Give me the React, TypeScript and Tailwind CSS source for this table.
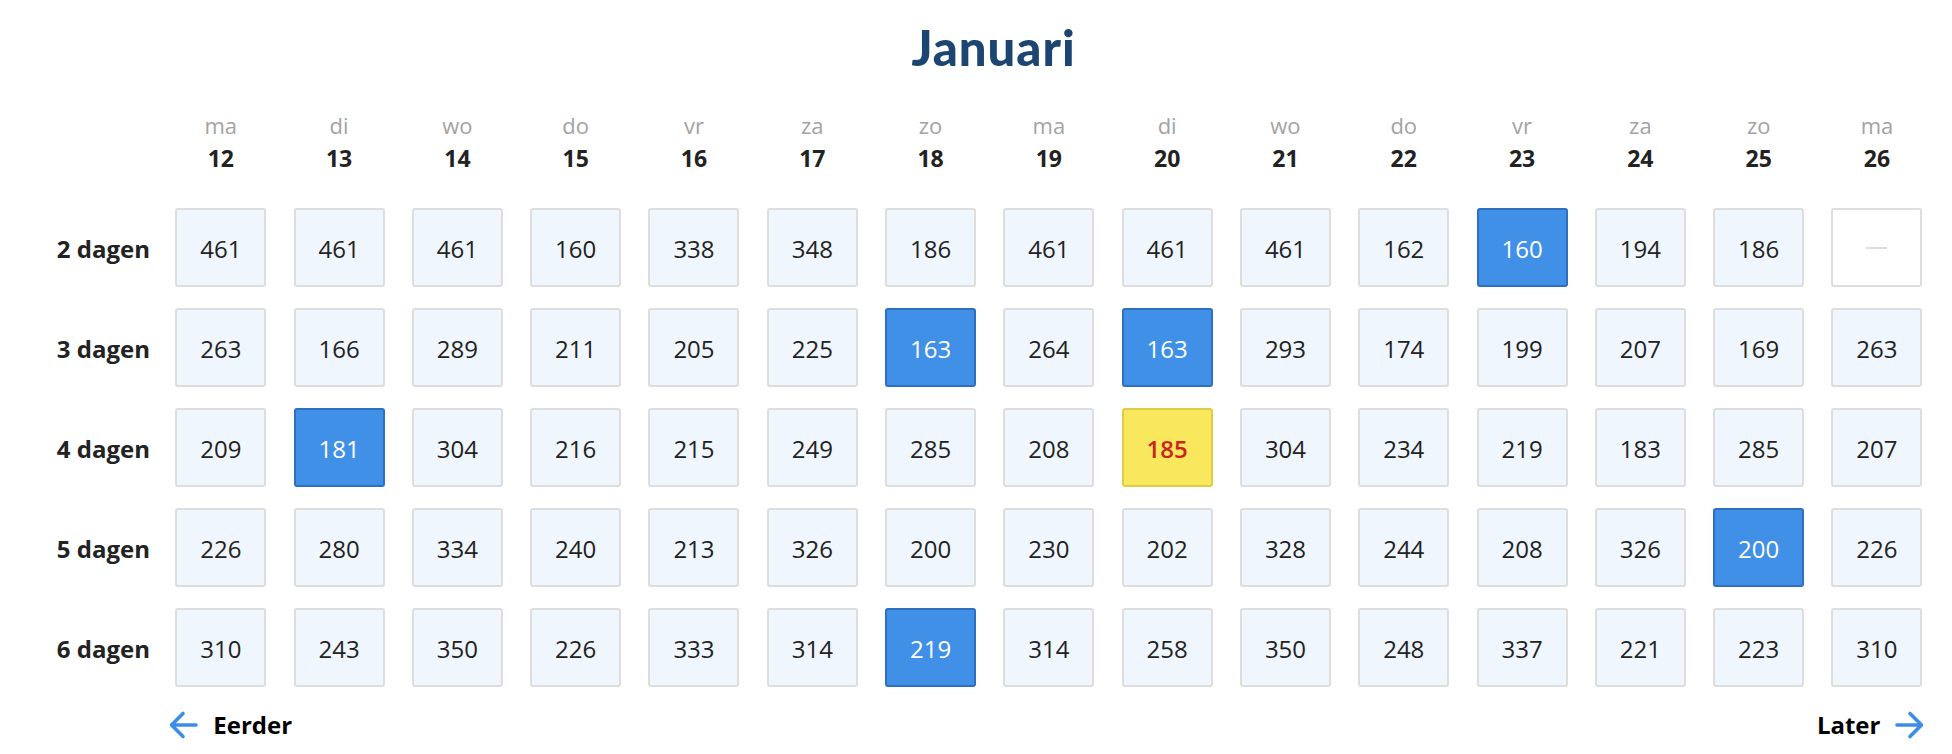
import React from "react";

type Cell = { v: string; kind?: "sel" | "best" | "empty" };

const days = ["ma", "di", "wo", "do", "vr", "za", "zo", "ma", "di", "wo", "do", "vr", "za", "zo", "ma"];
const dates = [12, 13, 14, 15, 16, 17, 18, 19, 20, 21, 22, 23, 24, 25, 26];

const rows: { label: string; cells: Cell[] }[] = [
    {
        label: "2 dagen",
        cells: [
            { v: "461" }, { v: "461" }, { v: "461" }, { v: "160" }, { v: "338" }, { v: "348" }, { v: "186" },
            { v: "461" }, { v: "461" }, { v: "461" }, { v: "162" }, { v: "160", kind: "sel" }, { v: "194" },
            { v: "186" }, { v: "", kind: "empty" },
        ],
    },
    {
        label: "3 dagen",
        cells: [
            { v: "263" }, { v: "166" }, { v: "289" }, { v: "211" }, { v: "205" }, { v: "225" }, { v: "163", kind: "sel" },
            { v: "264" }, { v: "163", kind: "sel" }, { v: "293" }, { v: "174" }, { v: "199" }, { v: "207" },
            { v: "169" }, { v: "263" },
        ],
    },
    {
        label: "4 dagen",
        cells: [
            { v: "209" }, { v: "181", kind: "sel" }, { v: "304" }, { v: "216" }, { v: "215" }, { v: "249" }, { v: "285" },
            { v: "208" }, { v: "185", kind: "best" }, { v: "304" }, { v: "234" }, { v: "219" }, { v: "183" },
            { v: "285" }, { v: "207" },
        ],
    },
    {
        label: "5 dagen",
        cells: [
            { v: "226" }, { v: "280" }, { v: "334" }, { v: "240" }, { v: "213" }, { v: "326" }, { v: "200" },
            { v: "230" }, { v: "202" }, { v: "328" }, { v: "244" }, { v: "208" }, { v: "326" },
            { v: "200", kind: "sel" }, { v: "226" },
        ],
    },
    {
        label: "6 dagen",
        cells: [
            { v: "310" }, { v: "243" }, { v: "350" }, { v: "226" }, { v: "333" }, { v: "314" }, { v: "219", kind: "sel" },
            { v: "314" }, { v: "258" }, { v: "350" }, { v: "248" }, { v: "337" }, { v: "221" },
            { v: "223" }, { v: "310" },
        ],
    },
];

const PriceCell = ({ cell }: { cell: Cell }) => {
    if (cell.kind === "empty") {
        return (
            <div className="h-[79px] rounded-[3px] border-2 border-[#dddddd] bg-white flex items-center justify-center">
                <span className="block w-[21px] h-[2px] bg-[#dcdcdc]" />
            </div>
        );
    }
    if (cell.kind === "sel") {
        return (
            <div className="h-[79px] pt-[2px] rounded-[3px] border-2 border-[#2f70bd] bg-[#4190e8] flex items-center justify-center text-[24px] text-white">
                {cell.v}
            </div>
        );
    }
    if (cell.kind === "best") {
        return (
            <div className="h-[79px] pt-[2px] rounded-[3px] border-2 border-[#dfcd4a] bg-[#f9e75e] flex items-center justify-center text-[24px] font-semibold text-[#c9251f]">
                {cell.v}
            </div>
        );
    }
    return (
        <div className="h-[79px] pt-[2px] rounded-[3px] border-2 border-[#dddddd] bg-[#f0f6fd] flex items-center justify-center text-[24px] text-[#222222]">
            {cell.v}
        </div>
    );
};

const Arrow = ({ dir }: { dir: "left" | "right" }) => (
    <svg width="31" height="30" viewBox="0 0 31 30" fill="none" stroke="#3d8de6" strokeWidth="3.6"
        strokeLinecap="round" strokeLinejoin="round"
        className={dir === "right" ? "rotate-180" : ""}>
        <path d="M28 15H3.5M15 3.5L3.5 15L15 26.5" />
    </svg>
);

export default function App() {
    return (
        <div className="w-[1952px] h-[754px] bg-white font-['Open_Sans',sans-serif] overflow-hidden">
            <div className="h-[98px] pl-[35px] pb-[4px] flex items-center justify-center">
                <h1 className="font-['Lato',sans-serif] font-black text-[49px] leading-none text-[#1c4572] tracking-[1px]">
                    Januari
                </h1>
            </div>

            <div className="grid grid-cols-[148px_repeat(15,91px)] gap-x-[27.3px]">
                {/* header */}
                <div />
                {days.map((d, i) => (
                    <div key={i} className="flex flex-col items-center pt-[12px]">
                        <span className="text-[22px] leading-[31px] text-[#a3a3a3]">{d}</span>
                        <span className="text-[23px] leading-[35px] font-bold text-[#222222]">{dates[i]}</span>
                    </div>
                ))}

                <div className="col-span-16 h-[32px]" />

                {rows.map((row, r) => (
                    <React.Fragment key={row.label}>
                        <div className={`-mr-[2px] pt-[2px] flex items-center justify-end text-[24px] font-bold text-[#222222] ${r < rows.length - 1 ? "mb-[21px]" : ""}`}>
                            {row.label}
                        </div>
                        {row.cells.map((c, i) => (
                            <div key={i} className={r < rows.length - 1 ? "mb-[21px]" : ""}>
                                <PriceCell cell={c} />
                            </div>
                        ))}
                    </React.Fragment>
                ))}

                <div />
                <div className="col-span-15 mt-[20px] flex items-center justify-between">
                    <button className="-ml-[7px] flex items-center gap-[14px] text-[24px] font-bold text-black">
                        <Arrow dir="left" />
                        Eerder
                    </button>
                    <button className="-mr-[3px] flex items-center gap-[14px] text-[24px] font-bold text-black">
                        Later
                        <Arrow dir="right" />
                    </button>
                </div>
            </div>
        </div>
    );
}
